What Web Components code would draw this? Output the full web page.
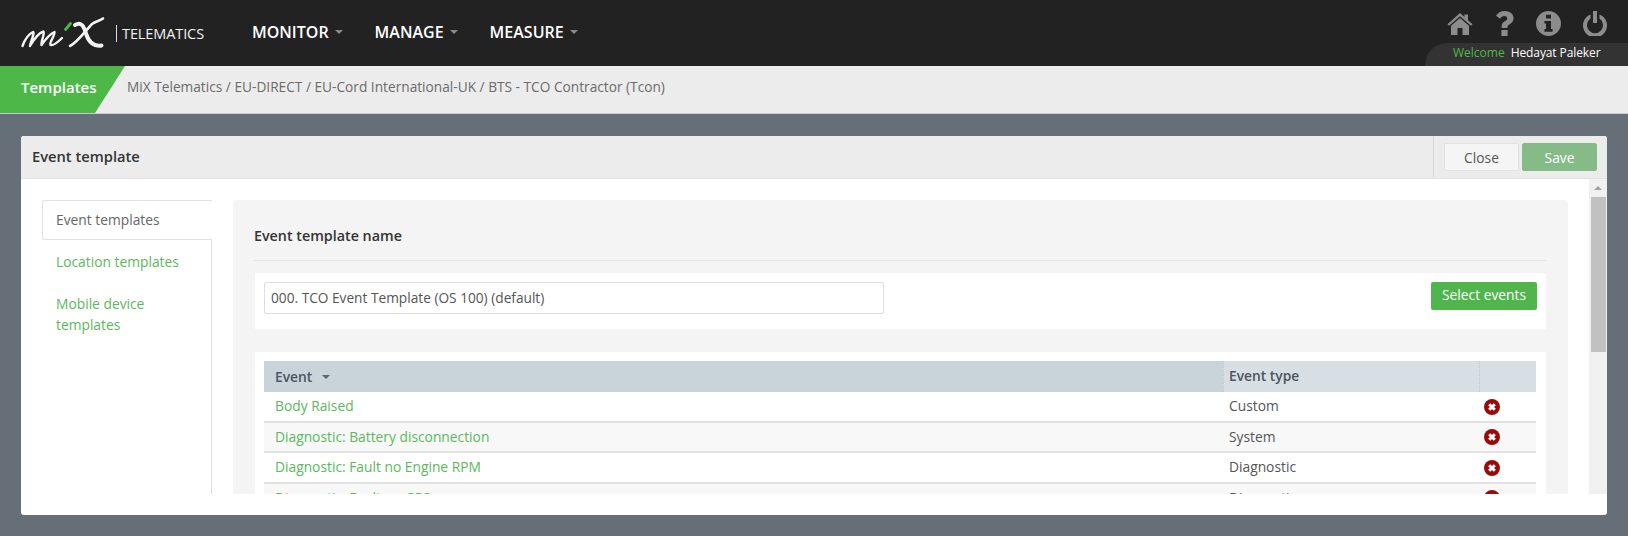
<!DOCTYPE html>
<html>
<head>
<meta charset="utf-8">
<title>Event template</title>
<style>
  html, body { margin: 0; height: 536px; overflow: hidden; background: #666e78; }
  body { font-family: "Open Sans", "Liberation Sans", sans-serif; font-size: 14px; color: #555; }
</style>
</head>
<body>
<app-topbar></app-topbar>
<app-crumbs title-text="Templates">MiX Telematics / EU-DIRECT / EU-Cord International-UK / BTS - TCO Contractor (Tcon)</app-crumbs>
<event-modal>
  <side-tabs slot="side"></side-tabs>
  <template-panel></template-panel>
</event-modal>

<script>
class AppTopbar extends HTMLElement {
    constructor() {
        super();
        this.attachShadow({ mode: 'open' });
    }

    connectedCallback() {
        const caret = '<i class="caret"></i>';
        this.shadowRoot.innerHTML = `
            <style>
                :host { display: flex; height: 66px; background: #222; color: #fff; align-items: stretch; }
                .brand { display: flex; align-items: center; width: 252px; padding-left: 20px; box-sizing: border-box; }
                .brand svg { display: block; margin-top: -2px; }
                .brand .sep { width: 1px; height: 17px; background: #ddd; margin: 0 5px 0 6px; }
                .brand .word { font-size: 14.5px; letter-spacing: -0.1px; color: #f2f2f2; }
                nav { display: flex; align-items: center; gap: 32px; font-size: 16px; font-weight: 600; padding-bottom: 2px; }
                nav span { display: flex; align-items: center; }
                .caret { width: 0; height: 0; border: 4px solid transparent; border-top-color: #8a8a8a; border-bottom: 0; margin-left: 6px; }
                .right { margin-left: auto; width: 203px; display: flex; flex-direction: column; align-items: flex-end; }
                .icons { display: flex; align-items: center; gap: 22px; height: 43px; padding-right: 21px; box-sizing: border-box; padding-top: 3px; }
                .icons svg { display: block; fill: #8c8c8c; }
                .welcome { width: 100%; height: 23px; box-sizing: border-box; background: #333; border-top-left-radius: 22px; font-size: 12px; line-height: 20px; padding-left: 28px; white-space: nowrap; letter-spacing: -0.1px; }
                .welcome b { color: #4db848; font-weight: 400; margin-right: 3px; letter-spacing: 0; }
            </style>
            <div class="brand">
                <svg width="90" height="36" viewBox="0 0 90 36" fill="none" stroke-linecap="round" stroke-linejoin="round">
                    <path d="M2.5 32 C5 25 9 20 13 18 C15 18 11 27 10 32 C14 25 19 19 23.5 17.5 C25 19 21 27 21.5 31 C25 26 30 20 34.5 18 C35 22 29 28 30.5 31 C33 32 38 28 42 24" stroke="#f4f4f4" stroke-width="2.4"/>
                    <path d="M45.5 15.5 L50.5 9.5" stroke="#4db848" stroke-width="2.8"/>
                    <path d="M55 11 C62 7 64 13 66.5 21 C69 28 74 33 81.5 31.5" stroke="#f4f4f4" stroke-width="4"/>
                    <path d="M50 32 C58 28 66 16 72 10 C76 7 80 7 83 4.5" stroke="#f4f4f4" stroke-width="2.6"/>
                </svg>
                <div class="sep"></div>
                <div class="word">TELEMATICS</div>
            </div>
            <nav>
                <span>MONITOR${caret}</span>
                <span>MANAGE${caret}</span>
                <span>MEASURE${caret}</span>
            </nav>
            <div class="right">
                <div class="icons">
                    <svg width="26" height="23" viewBox="0 0 26 23"><path d="M13 1 L17.5 5 V2.5 H21 V8.2 L25.5 12.2 L24 13.8 L13 4.2 L2 13.8 L0.5 12.2 Z"/><path d="M13 6 L22 13.8 V23 H15.5 V16 H10.5 V23 H4 V13.8 Z"/></svg>
                    <svg width="19" height="25" viewBox="0 0 19 25"><path d="M9.5 0 C15 0 18.5 3 18.5 7.2 C18.5 10.4 16.7 12 14.6 13.3 C13 14.3 12.4 15 12.4 16.5 V17 H6.6 V15.6 C6.6 12.9 7.9 11.5 9.8 10.3 C11.2 9.4 12.2 8.8 12.2 7.4 C12.2 6 11 5.1 9.4 5.1 C7.6 5.1 6.2 6.1 5 7.7 L1 4.7 C3 1.7 5.7 0 9.5 0 Z M6.4 19 H12.6 V25 H6.4 Z"/></svg>
                    <svg width="25" height="25" viewBox="0 0 25 25"><path fill-rule="evenodd" d="M12.5 0 A12.5 12.5 0 1 1 12.5 25 A12.5 12.5 0 1 1 12.5 0 Z M10 3.8 V7.6 H15 V3.8 Z M8.4 10 V12.6 H10 V18 H8.4 V20.8 H16.6 V18 H15 V10 Z"/></svg>
                    <svg width="24" height="25" viewBox="0 0 24 25"><path d="M10 0 H14 V12 H10 Z"/><path d="M7.5 3.4 V7.6 A8 8 0 1 0 16.5 7.6 V3.4 A12 12 0 1 1 7.5 3.4 Z"/></svg>
                </div>
                <div class="welcome"><b>Welcome</b> Hedayat Paleker</div>
            </div>
        `;
    }
}

class AppCrumbs extends HTMLElement {
    constructor() {
        super();
        this.attachShadow({ mode: 'open' });
    }

    connectedCallback() {
        this.shadowRoot.innerHTML = `
            <style>
                :host { display: flex; height: 47px; background: #ececec; border-bottom: 1px solid #c9ccd0; align-items: stretch; }
                .title { width: 125px; box-sizing: border-box; background: #4db848; color: #fff; font-size: 15px; font-weight: 600; line-height: 43px; padding-left: 21px; clip-path: polygon(0 0, 100% 0, 76% 100%, 0 100%); }
                .path { font-size: 13.7px; color: #6b6b6b; line-height: 41px; padding-left: 2px; }
            </style>
            <div class="title">${this.getAttribute('title-text')}</div>
            <div class="path"><slot></slot></div>
        `;
    }
}

class EventModal extends HTMLElement {
    constructor() {
        super();
        this.attachShadow({ mode: 'open' });
    }

    connectedCallback() {
        this.shadowRoot.innerHTML = `
            <style>
                :host { display: block; width: 1586px; height: 379px; margin: 22px 0 0 21px; background: #fff; border-radius: 3px; box-sizing: border-box; overflow: hidden; }
                header { display: flex; height: 43px; background: #ececec; border-bottom: 1px solid #e2e2e2; box-sizing: border-box; align-items: stretch; }
                h1 { margin: 0; flex: 1; font-size: 14.7px; font-weight: 600; color: #333; line-height: 41px; padding-left: 11px; }
                .actions { width: 174px; box-sizing: border-box; display: flex; gap: 3px; padding: 7px 10px 0 10px; border-left: 1px solid #d8d8d8; height: 41px; }
                button { font: inherit; font-size: 13.8px; width: 75px; height: 28px; border-radius: 2px; padding: 0; }
                .close { background: #f5f5f5; border: 1px solid #e2e2e2; color: #555; }
                .save { background: #85bb87; border: 1px solid #85bb87; color: #fff; }
                .body { display: flex; height: 315px; overflow: hidden; }
                .main { flex: 1; min-width: 0; overflow: hidden; display: flex; gap: 21px; padding: 21px 0 0 21px; box-sizing: border-box; }
                .pane { width: 1335px; overflow: hidden; }
            </style>
            <header>
                <h1>Event template</h1>
                <div class="actions">
                    <button class="close">Close</button>
                    <button class="save">Save</button>
                </div>
            </header>
            <div class="body">
                <div class="main">
                    <slot name="side"></slot>
                    <div class="pane"><slot></slot></div>
                </div>
                <fake-scrollbar></fake-scrollbar>
            </div>
        `;
    }
}

class FakeScrollbar extends HTMLElement {
    constructor() {
        super();
        this.attachShadow({ mode: 'open' });
    }

    connectedCallback() {
        this.shadowRoot.innerHTML = `
            <style>
                :host { display: flex; flex-direction: column; width: 18px; flex: none; background: #f1f1f1; align-items: stretch; }
                .up { height: 18px; display: flex; align-items: center; justify-content: center; }
                .up i { width: 0; height: 0; border: 4px solid transparent; border-bottom-color: #a3a3a3; border-top: 0; }
                .thumb { height: 155px; background: #c1c1c1; margin: 0 1px 0 2px; }
            </style>
            <div class="up"><i></i></div>
            <div class="thumb"></div>
        `;
    }
}

class SideTabs extends HTMLElement {
    constructor() {
        super();
        this.attachShadow({ mode: 'open' });
    }

    connectedCallback() {
        this.shadowRoot.innerHTML = `
            <style>
                :host { display: block; width: 170px; flex: none; border-right: 1px solid #ddd; box-sizing: border-box; height: 300px; font-size: 13.8px; line-height: 21px; }
                .tab { color: #5cb85c; width: 170px; box-sizing: border-box; padding: 0 13px 0 14px; }
                .active { color: #666; height: 40px; line-height: 37px; border: 1px solid #e2e2e2; border-right: 0; border-radius: 3px 0 0 3px; background: #fff; margin-bottom: 11px; padding-left: 13px; }
                .next { margin-bottom: 20px; line-height: 22px; }
            </style>
            <div class="tab active">Event templates</div>
            <div class="tab next">Location templates</div>
            <div class="tab">Mobile device templates</div>
        `;
    }
}

class TemplatePanel extends HTMLElement {
    constructor() {
        super();
        this.attachShadow({ mode: 'open' });
    }

    connectedCallback() {
        this.shadowRoot.innerHTML = `
            <style>
                :host { display: block; background: #f4f4f4; padding: 0 22px 0 21px; height: 300px; border-radius: 3px 3px 0 0; overflow: hidden; }
                h2 { margin: 0; height: 60px; line-height: 72px; font-size: 14.3px; font-weight: 600; color: #333; border-bottom: 1px solid #e4e4e4; }
                .box { background: #fff; padding: 9px 10px 9px 9px; margin-left: 1px; }
                .name { display: flex; justify-content: space-between; align-items: flex-start; margin: 12px 0 23px 1px; padding: 9px 9px 15px 9px; }
                .field { width: 620px; height: 32px; box-sizing: border-box; border: 1px solid #ddd; border-radius: 2px; line-height: 29px; padding-left: 6px; color: #555; font-size: 13.7px; }
                .select { background: #4fb54c; color: #fff; font-size: 13.8px; height: 28px; line-height: 26px; width: 106px; text-align: center; border-radius: 2px; }
            </style>
            <h2>Event template name</h2>
            <div class="box name">
                <div class="field">000. TCO Event Template (OS 100) (default)</div>
                <div class="select">Select events</div>
            </div>
            <div class="box">
                <event-table></event-table>
            </div>
        `;
    }
}

class EventTable extends HTMLElement {
    constructor() {
        super();
        this.attachShadow({ mode: 'open' });
    }

    connectedCallback() {
        const rows = [
            ['Body Raised', 'Custom'],
            ['Diagnostic: Battery disconnection', 'System'],
            ['Diagnostic: Fault no Engine RPM', 'Diagnostic'],
            ['Diagnostic: Fault no GPS', 'Diagnostic']
        ];
        const remove = `<svg width="16" height="16" viewBox="0 0 16 16"><circle cx="8" cy="8" r="8" fill="#9b0a0a"/><path d="M5.2 5.2 L10.8 10.8 M10.8 5.2 L5.2 10.8" stroke="#fff" stroke-width="3"/></svg>`;
        this.shadowRoot.innerHTML = `
            <style>
                :host { display: block; font-size: 13.8px; }
                .row { display: grid; grid-template-columns: 959px 256px 1fr; }
                .head { height: 31px; line-height: 30px; font-weight: 600; color: #4d5560; }
                .head > div { background: #d7dfe5; padding-left: 5px; border-left: 1px dotted #bcc6ce; }
                .head > div:first-child { background: #c9d3da; padding-left: 11px; border-left: 0; display: flex; align-items: center; gap: 10px; }
                .head i { width: 0; height: 0; border: 4px solid transparent; border-top-color: #5c6570; border-bottom: 0; }
                .cell { padding-left: 6px; line-height: 27px; height: 28px; color: #555; }
                .cell.link { color: #5cb85c; padding-left: 11px; }
                .item { border-bottom: 2px solid #e2e2e2; height: 30.5px; box-sizing: border-box; }
                .item:nth-child(even) { background: #f8f8f8; }
                .item:nth-child(odd) { background: #fff; }
                .x { padding-left: 5px; display: flex; align-items: center; height: 29px; }
                .x svg { display: block; }
            </style>
            <div class="row head"><div>Event <i></i></div><div>Event type</div><div></div></div>
            ${rows.map(r => `
                <div class="row item">
                    <div class="cell link">${r[0]}</div>
                    <div class="cell">${r[1]}</div>
                    <div class="x">${remove}</div>
                </div>
            `).join('')}
        `;
    }
}

customElements.define('app-topbar', AppTopbar);
customElements.define('app-crumbs', AppCrumbs);
customElements.define('event-modal', EventModal);
customElements.define('fake-scrollbar', FakeScrollbar);
customElements.define('side-tabs', SideTabs);
customElements.define('template-panel', TemplatePanel);
customElements.define('event-table', EventTable);
</script>
</body>
</html>
